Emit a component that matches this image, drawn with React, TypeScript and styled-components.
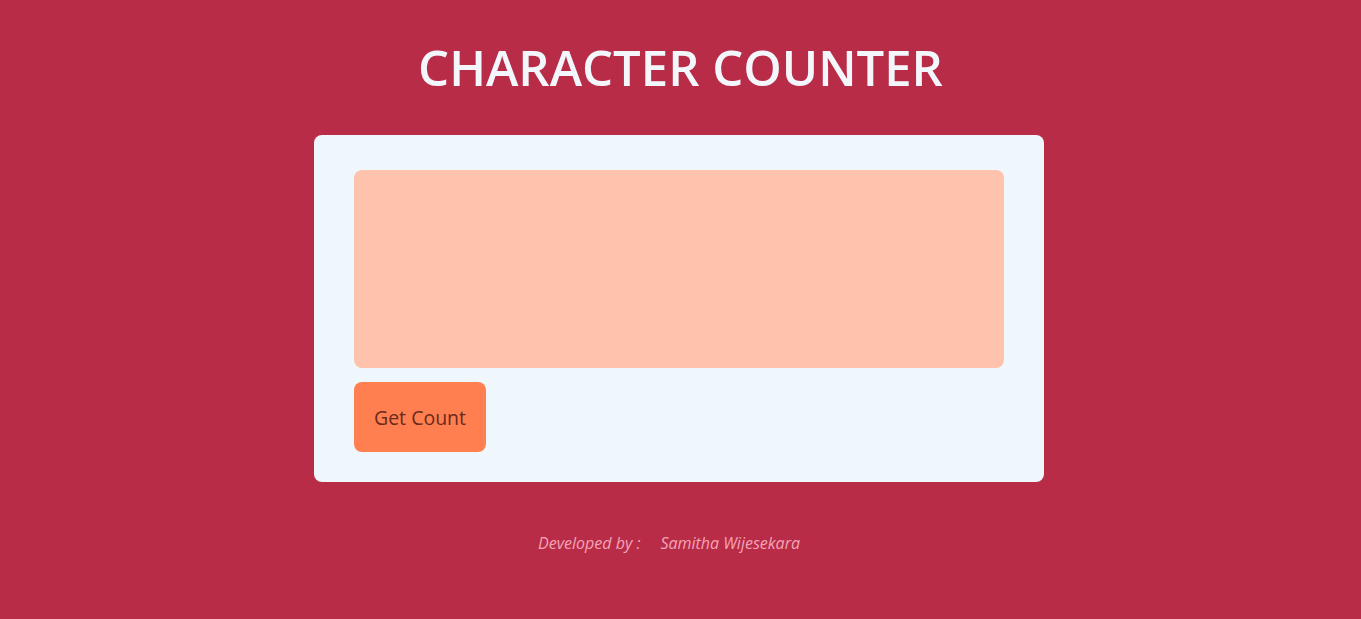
import React from "react";
import styled, { createGlobalStyle } from "styled-components";

const Global = createGlobalStyle`
  html, body { margin: 0; padding: 0; background: #b92c48; }
  body { font-family: "Open Sans", "Noto Sans", sans-serif; }
  * { box-sizing: border-box; }
`;

const Page = styled.div`
  min-height: 619px;
  display: flex;
  flex-direction: column;
  align-items: center;
  background: #b92c48;
`;

const Title = styled.h1`
  margin: 34px 0 0;
  height: 67px;
  line-height: 66px;
  font-size: 49px;
  font-weight: 600;
  color: #f3f6fb;
`;

const Card = styled.div`
  margin-top: 34px;
  margin-right: 3px;
  width: 730px;
  padding: 35px 40px 30px;
  background: #eff7fc;
  border-radius: 8px;
  display: flex;
  flex-direction: column;
  align-items: flex-start;
  gap: 14px;
`;

const TextArea = styled.textarea`
  width: 650px;
  height: 198px;
  border: none;
  outline: none;
  resize: none;
  border-radius: 8px;
  background: #ffc3ad;
  padding: 10px;
  font-family: inherit;
  font-size: 16px;
  display: block;
`;

const Button = styled.button`
  width: 132px;
  height: 70px;
  border: none;
  border-radius: 8px;
  background: #ff7f50;
  color: #6a2a1c;
  font-family: "Open Sans", "Noto Sans", sans-serif;
  font-size: 19.5px;
  font-weight: 500;
  padding: 0;
  cursor: pointer;
`;

const Footer = styled.p`
  margin: 50px 0 0;
  padding-right: 23px;
  font-size: 16px;
  font-style: italic;
  color: #f5a3b6;
  display: flex;
  gap: 20px;
`;

export default function App() {
  return (
    <>
      <Global />
      <Page>
        <Title>CHARACTER COUNTER</Title>
        <Card>
          <TextArea />
          <Button>Get Count</Button>
        </Card>
        <Footer>
          <span>Developed by :</span>
          <span>Samitha Wijesekara</span>
        </Footer>
      </Page>
    </>
  );
}
